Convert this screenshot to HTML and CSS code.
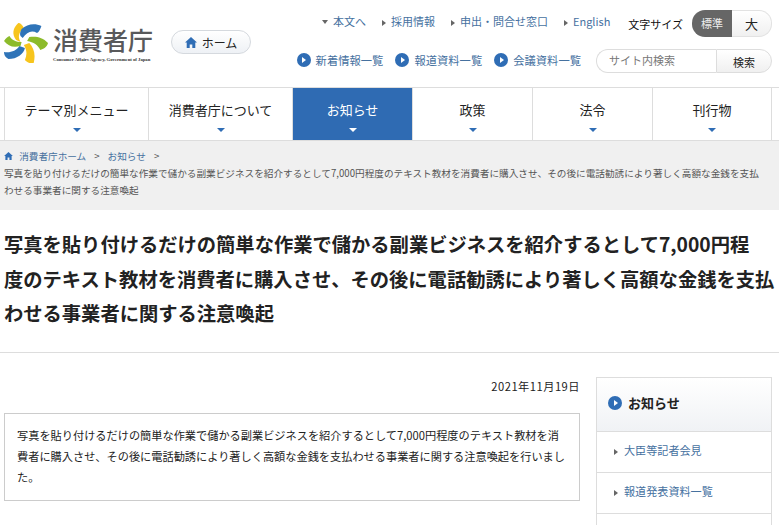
FILE: index.html
```html
<!DOCTYPE html>
<html lang="ja">
<head>
    <meta charset="UTF-8">
    <title>消費者庁</title>
    <link rel="stylesheet" href="styles.css">
</head>
<body>
    <header class="header">
        <div class="logo">
            <svg class="logo-mark" width="44" height="40" viewBox="4 1 40 40" preserveAspectRatio="none">
                <path d="M17 1c-5 5-6 11-2 17l4 2c-3-6-1-10 3-14-1-3-3-5-5-5z" fill="#f7c51d"/>
                <path d="M20 7c5-5 12-6 18-3-1 3-2 6-4 7-5-3-9-1-13 5l-2-2c-1-2 0-5 1-7z" fill="#2f74b8"/>
                <path d="M27 15c6-1 12 0 17 6-1 4-4 6-7 7-2-5-6-8-12-9z" fill="#8cbb2b"/>
                <path d="M27 21c4 5 6 11 4 20-4 1-6-1-8-3 2-5 2-10-1-15z" fill="#f7c51d"/>
                <path d="M23 26c-1 6-7 11-15 11-3-2-4-4-4-7 6 1 11-1 14-6z" fill="#2f74b8"/>
                <path d="M19 24C12 26 8 24 4 19c2-3 3-4 5-5 2 4 6 6 11 6z" fill="#8cbb2b"/>
            </svg>
            <div class="logo-text">
                <div class="logo-name">消費者庁</div>
                <div class="logo-sub">Consumer Affairs Agency, Government of Japan</div>
            </div>
        </div>
        <a class="home-btn" href="#">
            <svg width="12" height="11" viewBox="0 0 12 11"><path d="M6 0L0 5.600h1.700V11h3V7.400h2.600V11h3V5.600H12z" fill="#2f6db5"/></svg>
            ホーム
        </a>
        <div class="header-right">
            <div class="util-row">
                <ul class="util-links">
                    <li><span class="tri-down"></span>本文へ</li>
                    <li><span class="tri"></span>採用情報</li>
                    <li><span class="tri"></span>申出・問合せ窓口</li>
                    <li><span class="tri"></span>English</li>
                </ul>
                <span class="size-label">文字サイズ</span>
                <div class="size-switch">
                    <span class="size-on">標準</span>
                    <span class="size-off">大</span>
                </div>
            </div>
            <div class="util-row second">
                <ul class="list-links">
                    <li><span class="circle"></span>新着情報一覧</li>
                    <li><span class="circle"></span>報道資料一覧</li>
                    <li><span class="circle"></span>会議資料一覧</li>
                </ul>
                <form class="search">
                    <input class="search-input" type="text" placeholder="サイト内検索">
                    <button class="search-btn" type="button">検索</button>
                </form>
            </div>
        </div>
    </header>

    <nav class="gnav">
        <a class="gnav-item wide" href="#">テーマ別メニュー</a>
        <a class="gnav-item wide" href="#">消費者庁について</a>
        <a class="gnav-item active" href="#">お知らせ</a>
        <a class="gnav-item" href="#">政策</a>
        <a class="gnav-item" href="#">法令</a>
        <a class="gnav-item" href="#">刊行物</a>
    </nav>

    <div class="breadcrumb">
        <div class="crumbs">
            <svg width="9" height="8" viewBox="0 0 12 11"><path d="M6 0L0 5.600h1.700V11h3V7.400h2.600V11h3V5.600H12z" fill="#2f6db5"/></svg>
            <a href="#">消費者庁ホーム</a><span class="sep">&gt;</span><a href="#">お知らせ</a><span class="sep">&gt;</span>
        </div>
        <div class="crumb-current">写真を貼り付けるだけの簡単な作業で儲かる副業ビジネスを紹介するとして7,000円程度のテキスト教材を消費者に購入させ、その後に電話勧誘により著しく高額な金銭を支払<br>わせる事業者に関する注意喚起</div>
    </div>

    <h1 class="title">写真を貼り付けるだけの簡単な作業で儲かる副業ビジネスを紹介するとして7,000円程<br>度のテキスト教材を消費者に購入させ、その後に電話勧誘により著しく高額な金銭を支払<br>わせる事業者に関する注意喚起</h1>

    <div class="content">
        <main class="main">
            <p class="date">2021年11月19日</p>
            <div class="lead">写真を貼り付けるだけの簡単な作業で儲かる副業ビジネスを紹介するとして7,000円程度のテキスト教材を消<br>費者に購入させ、その後に電話勧誘により著しく高額な金銭を支払わせる事業者に関する注意喚起を行いまし<br>た。</div>
        </main>
        <aside class="side">
            <h2 class="side-title"><span class="circle"></span>お知らせ</h2>
            <ul class="side-list">
                <li><span class="tri"></span>大臣等記者会見</li>
                <li><span class="tri"></span>報道発表資料一覧</li>
                <li></li>
            </ul>
        </aside>
    </div>
</body>
</html>
```

FILE: styles.css
```css
html, body {
    overflow: hidden;
}

body {
    margin: 0;
    background-color: #fff;
    color: #222;
    font-family: "Noto Sans CJK JP", "Noto Sans", sans-serif;
    font-size: 12px;
}

ul {
    list-style: none;
    margin: 0;
    padding: 0;
}

a {
    color: inherit;
    text-decoration: none;
}

/* header */
.header {
    display: flex;
    height: 87px;
    box-sizing: border-box;
    padding-left: 4px;
}

.logo {
    display: flex;
    flex: 0 0 150px;
    margin-top: 21px;
    height: 44px;
}

.logo-mark {
    flex: none;
    margin-top: 2px;
}

.logo-text {
    margin-left: 5px;
}

.logo-name {
    color: #58595b;
    font-size: 25px;
    line-height: 36px;
    white-space: nowrap;
    font-weight: 500;
}

.logo-sub {
    color: #333;
    font-family: "Liberation Serif", serif;
    font-size: 4.700px;
    line-height: 5px;
    white-space: nowrap;
    font-weight: bold;
}

.home-btn {
    display: flex;
    align-items: center;
    justify-content: center;
    gap: 5px;
    box-sizing: border-box;
    width: 80px;
    height: 24px;
    margin: 30px 0 0 17px;
    border: 1px solid #d5d9de;
    border-radius: 12px;
    background: linear-gradient(#fff, #eef1f5);
    font-size: 12px;
}

.header-right {
    flex: 1;
    padding: 10px 7px 0 0;
}

.util-row {
    display: flex;
    align-items: center;
    justify-content: flex-end;
    height: 27px;
}

.util-row.second {
    height: 24px;
    margin-top: 12px;
}

.util-links {
    display: flex;
    color: #46719f;
    font-size: 11px;
    margin-top: -6px;
}

.util-links li {
    margin-right: 16px;
    white-space: nowrap;
}

.util-links li:last-child {
    margin-right: 18px;
}

.tri,
.tri-down {
    display: inline-block;
    border-style: solid;
    border-color: transparent;
}

.tri {
    border-width: 3px 0 3px 4px;
    border-left-color: #666;
    margin-right: 5px;
}

.tri-down {
    border-width: 4px 3px 0;
    border-top-color: #666;
    margin: 0 5px 2px 0;
}

.size-label {
    color: #111;
    font-size: 11px;
    margin-right: 9px;
    white-space: nowrap;
}

.size-switch {
    display: flex;
    width: 80px;
    height: 27px;
    line-height: 26px;
    text-align: center;
}

.size-on {
    width: 40px;
    background-color: #666;
    color: #eee;
    font-size: 11px;
    border-radius: 13px 0 0 13px;
}

.size-off {
    width: 40px;
    border: 1px solid #e2e2e2;
    border-left: 0;
    box-sizing: border-box;
    background: linear-gradient(#fff, #f0f0f0);
    font-size: 13px;
    border-radius: 0 13px 13px 0;
}

.circle {
    position: relative;
    display: inline-block;
    flex: none;
    width: 14px;
    height: 14px;
    border-radius: 50%;
    background-color: #2f6db5;
}

.circle::after {
    content: "";
    position: absolute;
    left: 5.500px;
    top: 4px;
    border-style: solid;
    border-color: transparent;
    border-width: 3px 0 3px 4px;
    border-left-color: #fff;
}

.list-links {
    display: flex;
    color: #46719f;
    font-size: 11.300px;
    margin: -2px 15px 0 0;
}

.list-links li {
    display: flex;
    align-items: center;
    gap: 5px;
    margin-left: 12px;
    white-space: nowrap;
}

.search {
    display: flex;
    width: 176px;
    height: 24px;
    margin: 0;
}

.search-input {
    box-sizing: border-box;
    width: 120px;
    height: 24px;
    padding: 0 0 2px 12px;
    border: 1px solid #ddd;
    border-right: 0;
    border-radius: 12px 0 0 12px;
    font-family: inherit;
    font-size: 11px;
}

.search-input::placeholder {
    color: #777;
}

.search-btn {
    box-sizing: border-box;
    width: 56px;
    height: 24px;
    padding: 2px 0 0;
    border: 1px solid #ddd;
    border-radius: 0 12px 12px 0;
    background: linear-gradient(#fff, #f0f0f0);
    color: #222;
    font-family: inherit;
    font-size: 11px;
}

/* global nav */
.gnav {
    display: flex;
    box-sizing: border-box;
    height: 54px;
    padding: 0 7px 0 4px;
    border-top: 1px solid #ddd;
    border-bottom: 1px solid #ddd;
}

.gnav-item {
    position: relative;
    flex: 0 0 120px;
    box-sizing: border-box;
    padding-top: 12px;
    border-left: 1px solid #ddd;
    font-size: 13px;
    line-height: 20px;
    text-align: center;
    white-space: nowrap;
}

.gnav-item:last-child {
    border-right: 1px solid #ddd;
}

.gnav-item.wide {
    flex-basis: 144px;
}

.gnav-item::after {
    content: "";
    position: absolute;
    left: 50%;
    bottom: 8px;
    margin-left: -4px;
    border-style: solid;
    border-color: transparent;
    border-width: 4px 4px 0;
    border-top-color: #2f6db5;
}

.gnav-item.active {
    background-color: #2f6bb3;
    color: #fff;
}

.gnav-item.active::after {
    border-top-color: #fff;
}

/* breadcrumb */
.breadcrumb {
    height: 69px;
    box-sizing: border-box;
    padding: 7px 4px 0;
    background-color: #f0f0f0;
    color: #555;
    font-size: 9.650px;
    line-height: 17px;
    white-space: nowrap;
}

.crumbs a {
    color: #46719f;
    margin-left: 4px;
}

.sep {
    margin: 0 8px;
}

.sep + a {
    margin-left: 0;
}

/* title */
.title {
    margin: 0;
    padding: 17px 4px 21px;
    border-bottom: 1px solid #ddd;
    color: #222;
    font-size: 19.300px;
    font-weight: bold;
    line-height: 34.500px;
    white-space: nowrap;
}

/* content */
.content {
    display: flex;
    padding: 24px 7px 0 4px;
    gap: 16px;
}

.main {
    flex: 1;
    min-width: 0;
}

.date {
    margin: 0;
    font-size: 11.200px;
    letter-spacing: 0.500px;
    line-height: 18px;
    text-align: right;
}

.lead {
    margin-top: 18px;
    padding: 11px 12px 12px;
    border: 1px solid #ccc;
    font-size: 11.200px;
    line-height: 21px;
    white-space: nowrap;
}

.side {
    flex: 0 0 176px;
    box-sizing: border-box;
    border: 1px solid #ddd;
}

.side-title {
    display: flex;
    align-items: center;
    gap: 6px;
    height: 54px;
    box-sizing: border-box;
    margin: 0;
    padding: 0 0 3px 11px;
    border-bottom: 1px solid #ddd;
    background: linear-gradient(#fff, #f0f2f5);
    font-size: 13px;
    font-weight: bold;
}

.side-list {
    color: #46719f;
    font-size: 11.100px;
}

.side-list li {
    height: 41px;
    line-height: 37px;
    box-sizing: border-box;
    padding-left: 17px;
    border-bottom: 1px solid #ddd;
}

.side-list .tri {
    margin-right: 6px;
}
```
